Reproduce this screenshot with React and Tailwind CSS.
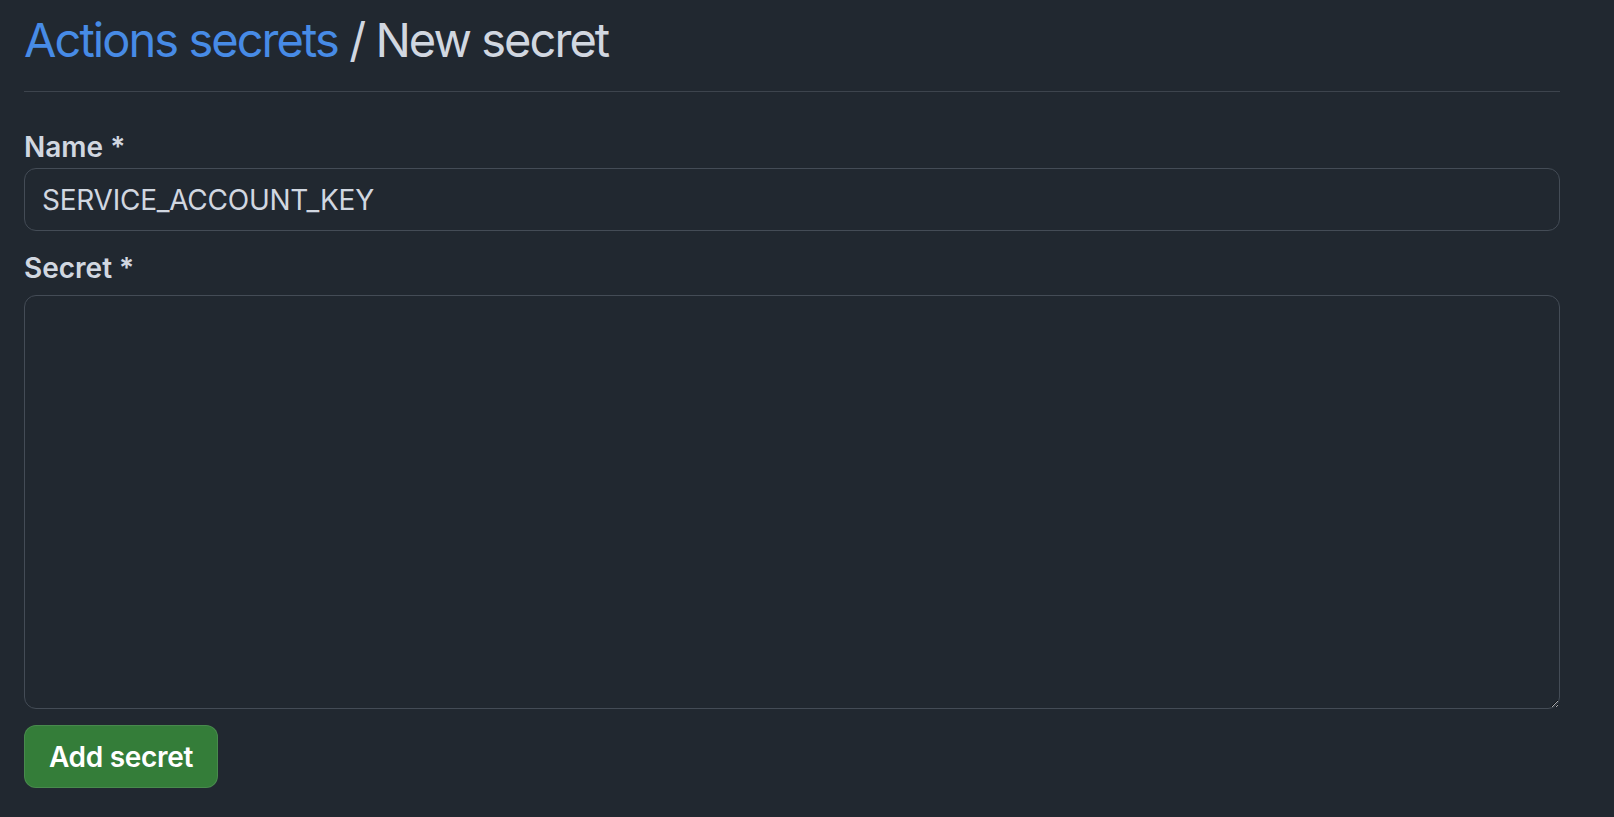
export default function App() {
  return (
    <div className="min-h-[817px] w-full bg-[#212830] font-['Inter','Liberation_Sans',sans-serif] text-[#d1d7e0]">
      <div className="w-[1536px] pl-6 pt-[10px] box-content">
        <h1 className="text-[47px] leading-[60px] font-normal tracking-[-1.95px]">
          <a href="#" className="text-[#478be6]">Actions secrets</a>
          <span> / New secret</span>
        </h1>
        <div className="mt-[21px] h-px bg-[#3d444d]" />

        <form className="flex flex-col" onSubmit={(e) => e.preventDefault()}>
          <label htmlFor="name" className="mt-[37px] text-[28px] leading-[36px] font-semibold">
            Name *
          </label>
          <input
            id="name"
            type="text"
            defaultValue="SERVICE_ACCOUNT_KEY"
            className="mt-[3px] h-[63px] rounded-xl border-[1.5px] border-[#444c56] bg-[#212830] px-[17px] text-[28px] tracking-[-0.25px] text-[#d1d7e0] outline-none"
          />

          <label htmlFor="secret" className="mt-[19px] text-[28px] leading-[36px] font-semibold">
            Secret *
          </label>
          <textarea
            id="secret"
            className="mt-[9px] h-[414px] rounded-xl border-[1.5px] border-[#444c56] bg-[#212830] px-[17px] py-3 text-[28px] text-[#d1d7e0] outline-none"
          />

          <div className="mt-[16px]">
            <button
              type="submit"
              className="flex h-[63px] w-[194px] items-center justify-center rounded-xl border-[1.5px] border-[#ffffff1a] bg-[#347d39] text-[28px] font-semibold tracking-[-0.3px] text-white"
            >
              Add secret
            </button>
          </div>
        </form>
      </div>
    </div>
  )
}
